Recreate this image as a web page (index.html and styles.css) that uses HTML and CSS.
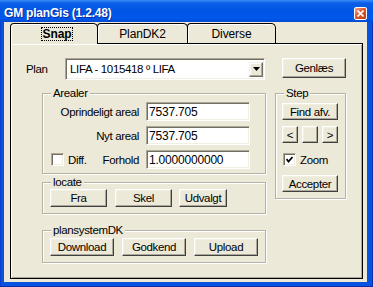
FILE: index.html
```html
<!DOCTYPE html>
<html lang="da">
<head>
    <meta charset="UTF-8">
    <meta name="viewport" content="width=device-width, initial-scale=1.0">
    <title>GM planGis (1.2.48)</title>
    <link rel="stylesheet" href="styles.css">
</head>
<body>
    <div class="window">
        <!-- Titellinje -->
        <div class="titlebar">
            <span class="title">GM planGis (1.2.48)</span>
            <span class="close-btn">
                <svg width="7" height="7" viewBox="0 0 7 7"><path d="M0.5 0.5L6.5 6.5M6.5 0.5L0.5 6.5" stroke="#fff" stroke-width="1.6"/></svg>
            </span>
        </div>

        <div class="client">
            <div class="tabs">
                <div class="tab tab-snap"><span class="focus">Snap</span></div>
                <div class="tab tab-plandk2">PlanDK2</div>
                <div class="tab tab-diverse">Diverse</div>
            </div>

            <div class="panel">
                <div class="plan-row">
                    <span class="plan-label">Plan</span>
                    <div class="combo">
                        <span class="combo-text">LIFA - 1015418 º LIFA</span>
                        <span class="drop">
                            <svg width="7" height="4" viewBox="0 0 7 4"><polygon points="0,0 7,0 3.5,4" fill="#000"/></svg>
                        </span>
                    </div>
                    <button class="btn btn-genlaes">Genlæs</button>
                </div>

                <div class="body">
                    <div class="left-col">
                        <!-- Arealer -->
                        <div class="group arealer">
                            <div class="group-title">Arealer</div>
                            <div class="field-row first">
                                <label>Oprindeligt areal</label>
                                <input class="field" type="text" value="7537.705">
                            </div>
                            <div class="field-row">
                                <label>Nyt areal</label>
                                <input class="field" type="text" value="7537.705">
                            </div>
                            <div class="field-row diff-row">
                                <span class="diff"><span class="check"></span>Diff.</span>
                                <label>Forhold</label>
                                <input class="field" type="text" value="1.0000000000">
                            </div>
                        </div>

                        <!-- locate -->
                        <div class="group locate">
                            <div class="group-title">locate</div>
                            <div class="btn-row">
                                <button class="btn btn-mid">Fra</button>
                                <button class="btn btn-mid btn-skel">Skel</button>
                                <button class="btn btn-udvalgt">Udvalgt</button>
                            </div>
                        </div>

                        <!-- plansystemDK -->
                        <div class="group plansys">
                            <div class="group-title">plansystemDK</div>
                            <div class="btn-row">
                                <button class="btn btn-wide">Download</button>
                                <button class="btn btn-wide">Godkend</button>
                                <button class="btn btn-wide">Upload</button>
                            </div>
                        </div>
                    </div>

                    <div class="right-col">
                        <div class="group step">
                            <div class="group-title">Step</div>
                            <div class="step-body">
                                <button class="btn btn-step btn-find">Find afv.</button>
                                <div class="arrows">
                                    <button class="btn btn-arrow">&lt;</button>
                                    <button class="btn btn-arrow"></button>
                                    <button class="btn btn-arrow">&gt;</button>
                                </div>
                                <div class="zoom-row">
                                    <span class="check">
                                        <svg width="7" height="7" viewBox="0 0 7 7"><polyline points="0.5,3 2.5,5.5 6.5,1" fill="none" stroke="#000" stroke-width="1.8"/></svg>
                                    </span>
                                    Zoom
                                </div>
                                <button class="btn btn-step btn-accept">Accepter</button>
                            </div>
                        </div>
                    </div>
                </div>
            </div>
        </div>
    </div>
</body>
</html>
```

FILE: styles.css
```css
body {
    margin: 0;
    font-family: "Liberation Sans", Arial, sans-serif;
    font-size: 11.5px;
    letter-spacing: -0.35px;
    color: #000;
    white-space: nowrap;
}

.window {
    width: 373px;
    height: 287px;
    box-sizing: border-box;
    display: flex;
    flex-direction: column;
    background: #0553e0;
    box-shadow: inset -1px -1px #0a2fa8, inset 1px 0 #0a3fc8;
}

/* Titellinje */
.titlebar {
    height: 22px;
    box-sizing: border-box;
    padding: 4px 6px 0 4px;
    display: flex;
    align-items: center;
    background: linear-gradient(180deg, #3b8df7 0%, #0a5fe8 14%, #0055e5 50%, #0058ec 85%, #0049d0 100%);
}

.title {
    flex: 1;
    font-weight: bold;
    font-size: 12px;
    letter-spacing: -0.2px;
    color: #fff;
    text-shadow: 1px 1px #0a2a9a;
}

.close-btn {
    width: 13px;
    height: 13px;
    box-sizing: border-box;
    border: 1px solid #fff;
    border-radius: 2px;
    background: linear-gradient(135deg, #f2a58a 0%, #e0582c 45%, #c23c12 100%);
    display: flex;
    align-items: center;
    justify-content: center;
}

.client {
    flex: 1;
    margin: 0 6px 5px 4px;
    padding: 1px 4px 3px 6px;
    background: #ece9d8;
    display: flex;
    flex-direction: column;
}

/* Faneblade */
.tabs {
    display: flex;
    height: 21px;
    margin-bottom: -1px;
}

.tab {
    box-sizing: border-box;
    height: 21px;
    border: 1px solid #000;
    border-bottom: none;
    border-radius: 4px 5px 0 0;
    background: #ece9d8;
    box-shadow: inset 1px 1px #fff;
    display: flex;
    align-items: center;
    justify-content: center;
    font-size: 12px;
    letter-spacing: -0.1px;
}

.tab + .tab {
    margin-left: -1px;
}

.tab-snap {
    width: 88px;
    padding-left: 6px;
    position: relative;
    z-index: 1;
    font-weight: bold;
}

.tab-plandk2 {
    width: 91px;
}

.tab-diverse {
    width: 89px;
}

.focus {
    border: 1px dotted #000;
    padding: 0 1px;
    line-height: 12px;
}

.panel {
    flex: 1;
    border: 1px solid #000;
    box-shadow: inset 1px 1px #fff, inset -1px -1px #aca899;
    padding-top: 14px;
}

/* Plan */
.plan-row {
    display: flex;
    align-items: flex-start;
    height: 22px;
    margin-left: 15px;
}

.plan-label {
    width: 39px;
    line-height: 22px;
}

.combo {
    width: 200px;
    height: 22px;
    box-sizing: border-box;
    display: flex;
    align-items: center;
    background: #fff;
    border: 1px solid;
    border-color: #aca899 #fff #fff #aca899;
    box-shadow: inset 1px 1px #716f64, inset -1px -1px #f1efe2;
    padding: 0 1px 0 4px;
}

.combo-text {
    flex: 1;
}

.drop {
    width: 14px;
    height: 15px;
    box-sizing: border-box;
    background: #ece9d8;
    border: 1px solid;
    border-color: #f1efe2 #716f64 #716f64 #f1efe2;
    box-shadow: inset -1px -1px #aca899, inset 1px 1px #fff;
    display: flex;
    align-items: center;
    justify-content: center;
}

/* Knapper */
.btn {
    font: inherit;
    letter-spacing: inherit;
    color: #000;
    margin: 0;
    padding: 0;
    box-sizing: border-box;
    background: #ece9d8;
    border: 1px solid;
    border-color: #fff #404040 #404040 #fff;
    box-shadow: inset -1px -1px #aca899, inset 1px 1px #f1efe2;
    display: flex;
    align-items: center;
    justify-content: center;
}

.btn-genlaes {
    width: 64px;
    height: 20px;
    margin-left: 17px;
}

.body {
    display: flex;
    margin: 6px 0 0 31px;
}

.left-col {
    width: 224px;
}

.right-col {
    width: 71px;
    margin-left: 9px;
}

/* Grupper */
.group {
    border: 1px solid #b5b2a3;
    box-shadow: inset 1px 1px #fff, 1px 1px #fff;
    margin-top: 7px;
}

.group-title {
    width: fit-content;
    margin: -8px 0 0 8px;
    padding: 0 2px;
    line-height: 14px;
    background: #ece9d8;
}

.arealer {
    padding-bottom: 4px;
}

.field-row {
    display: flex;
    align-items: center;
    justify-content: flex-end;
    height: 19px;
    margin-top: 5px;
    padding: 0 15px 0 8px;
}

.field-row.first {
    margin-top: 2px;
}

.field-row label {
    margin-right: 7px;
}

.field {
    width: 104px;
    height: 19px;
    box-sizing: border-box;
    font: inherit;
    font-size: 12px;
    letter-spacing: -0.2px;
    color: #000;
    margin: 0;
    padding: 0 0 0 2px;
    background: #fff;
    border: 1px solid;
    border-color: #aca899 #fff #fff #aca899;
    box-shadow: inset 1px 1px #716f64, inset -1px -1px #f1efe2;
    outline: none;
}

.check {
    width: 13px;
    height: 13px;
    box-sizing: border-box;
    background: #fff;
    border: 1px solid;
    border-color: #aca899 #fff #fff #aca899;
    box-shadow: inset 1px 1px #716f64, inset -1px -1px #f1efe2;
    display: flex;
    align-items: center;
    justify-content: center;
}

.diff {
    display: flex;
    align-items: center;
    gap: 4px;
    margin-right: auto;
}

.btn-row {
    display: flex;
    padding-left: 7px;
}

.locate {
    margin-top: 8px;
    padding-bottom: 6px;
}

.btn-mid {
    width: 57px;
    height: 18px;
}

.btn-skel {
    margin-left: 8px;
}

.btn-udvalgt {
    width: 48px;
    height: 18px;
    margin-left: 7px;
}

.plansys {
    margin-top: 16px;
    padding-bottom: 6px;
}

.plansys .btn-row {
    margin-top: 1px;
}

.btn-wide {
    width: 64px;
    height: 18px;
}

.btn-wide + .btn-wide {
    margin-left: 8px;
}

/* Step */
.step-body {
    padding: 0 0 6px 6px;
}

.btn-step {
    width: 56px;
    height: 17px;
}

.btn-find {
    margin-top: 3px;
}

.arrows {
    display: flex;
    gap: 4px;
    margin-top: 6px;
}

.btn-arrow {
    width: 16px;
    height: 17px;
}

.zoom-row {
    display: flex;
    align-items: center;
    gap: 4px;
    height: 13px;
    margin: 10px 0 0 1px;
}

.btn-accept {
    margin-top: 9px;
}
```
